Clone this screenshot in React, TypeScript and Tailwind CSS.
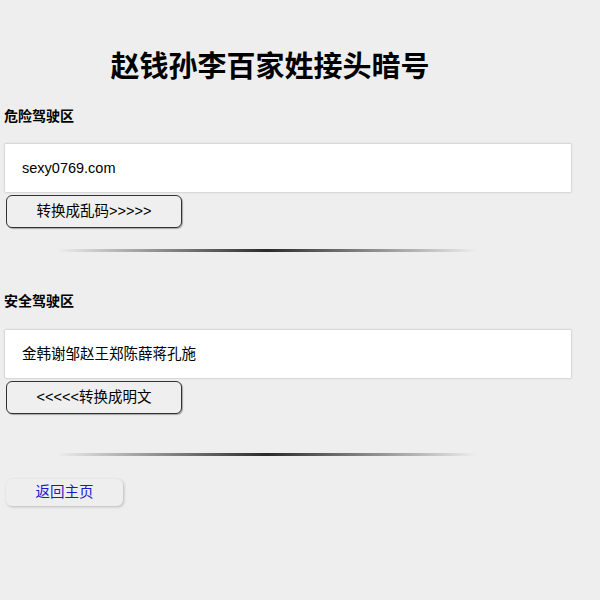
import React from "react";

export default function App() {
  return (
    <div className="min-h-[600px] w-[600px] bg-[#eeeeee] font-['Liberation_Sans','Noto_Sans_CJK_SC',sans-serif] text-black overflow-hidden">
      <h1 className="w-[540px] pt-[50px] text-center text-[29px] font-bold leading-[35px]">
        赵钱孙李百家姓接头暗号
      </h1>

      <div className="mt-[21px] pl-[4px] text-[14px] font-bold leading-[20px]">危险驾驶区</div>
      <div className="mt-[17px] ml-[4px] flex h-[50px] w-[568px] items-center rounded-[2px] border border-[#d9d9d9] bg-white pl-[17px] pt-[2px] text-[14.5px] shadow-[0_0_2px_rgba(0,0,0,0.08)]">
        sexy0769.com
      </div>
      <button className="mt-[2px] ml-[6px] flex h-[33px] w-[176px] items-center justify-center rounded-[6px] border-[1.5px] border-[#333333] bg-[#efefef] pt-[1px] text-[14.5px] shadow-[1px_1px_1px_rgba(0,0,0,0.3)]">
        转换成乱码&gt;&gt;&gt;&gt;&gt;
      </button>
      <div className="mt-[21px] ml-[57px] h-[3px] w-[420px] bg-linear-to-r from-transparent via-[#2a2a2a] to-transparent" />

      <div className="mt-[39px] pl-[4px] text-[14px] font-bold leading-[20px]">安全驾驶区</div>
      <div className="mt-[18px] ml-[4px] flex h-[50px] w-[568px] items-center rounded-[2px] border border-[#d9d9d9] bg-white pl-[17px] pt-[2px] text-[14.5px] shadow-[0_0_2px_rgba(0,0,0,0.08)]">
        金韩谢邹赵王郑陈薛蒋孔施
      </div>
      <button className="mt-[2px] ml-[6px] flex h-[33px] w-[176px] items-center justify-center rounded-[6px] border-[1.5px] border-[#333333] bg-[#efefef] pt-[1px] text-[14.5px] shadow-[1px_1px_1px_rgba(0,0,0,0.3)]">
        &lt;&lt;&lt;&lt;&lt;转换成明文
      </button>
      <div className="mt-[39px] ml-[57px] h-[3px] w-[420px] bg-linear-to-r from-transparent via-[#2a2a2a] to-transparent" />

      <a
        href="#"
        className="mt-[23px] ml-[6px] flex h-[27px] w-[117px] items-center justify-center rounded-[6px] bg-[#eeeeee] text-[14.5px] text-[#1a1acc] shadow-[1px_1px_3px_rgba(0,0,0,0.22)]"
      >
        返回主页
      </a>
    </div>
  );
}
